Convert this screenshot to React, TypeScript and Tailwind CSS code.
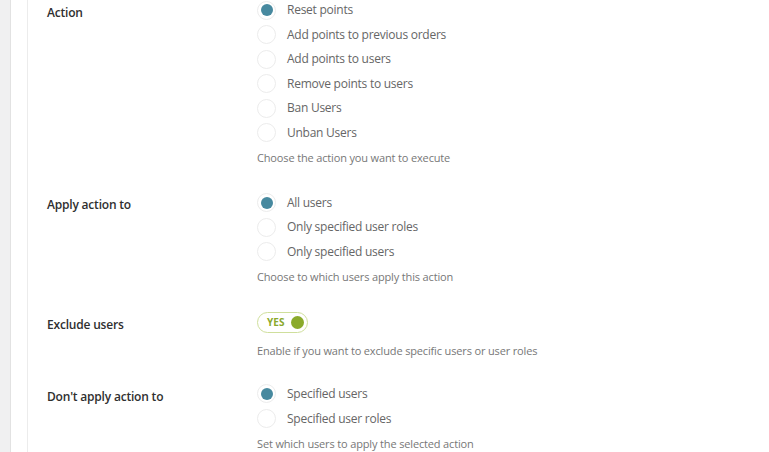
import type { ReactNode } from 'react';

type Section = {
  label: string;
  options?: { text: string; checked?: boolean }[];
  toggle?: boolean;
  description: string;
  descGap: string;
  after: string;
};

const sections: Section[] = [
  {
    label: 'Action',
    options: [
      { text: 'Reset points', checked: true },
      { text: 'Add points to previous orders' },
      { text: 'Add points to users' },
      { text: 'Remove points to users' },
      { text: 'Ban Users' },
      { text: 'Unban Users' },
    ],
    description: 'Choose the action you want to execute',
    descGap: 'mt-[5px]',
    after: 'mb-[24px]',
  },
  {
    label: 'Apply action to',
    options: [
      { text: 'All users', checked: true },
      { text: 'Only specified user roles' },
      { text: 'Only specified users' },
    ],
    description: 'Choose to which users apply this action',
    descGap: 'mt-[5px]',
    after: 'mb-[25px]',
  },
  {
    label: 'Exclude users',
    toggle: true,
    description: 'Enable if you want to exclude specific users or user roles',
    descGap: 'mt-[8px]',
    after: 'mb-[23px]',
  },
  {
    label: "Don't apply action to",
    options: [
      { text: 'Specified users', checked: true },
      { text: 'Specified user roles' },
    ],
    description: 'Set which users to apply the selected action',
    descGap: 'mt-[5px]',
    after: 'mb-[24px]',
  },
];

function Radio({ checked }: { checked?: boolean }) {
  return (
    <span className="w-[19px] h-[19px] rounded-full border border-[#ececec] bg-white flex items-center justify-center shrink-0">
      {checked && <span className="w-[12px] h-[12px] rounded-full bg-[#47899f]" />}
    </span>
  );
}

function Toggle() {
  return (
    <span className="flex items-center h-[21px] w-[51px] rounded-full border border-[#cfdf9c] bg-white pl-[9px] pr-[3px] justify-between">
      <span className="text-[10px] font-bold text-[#8aa92c] tracking-[0.1px]">YES</span>
      <span className="w-[13px] h-[13px] rounded-full bg-[#8aaa2b]" />
    </span>
  );
}

function Row({ children }: { children: ReactNode }) {
  return <div className="h-[24.6px] flex items-center">{children}</div>;
}

export default function App() {
  return (
    <div className="w-[769px] h-[452px] overflow-hidden flex bg-white" style={{ fontFamily: '"Open Sans", "Noto Sans", sans-serif' }}>
      <div className="w-[11px] bg-[#f0f0f1] border-r border-[#e2e2e2]" />
      <div className="w-[17px] border-r border-[#ececec]" />
      <div className="flex-1 pl-[19px] mt-[-2.3px]">
        {sections.map((s) => (
          <div key={s.label} className={`flex ${s.after}`}>
            <div className="w-[210px] shrink-0 pt-[5px] text-[12px] font-semibold text-[#2f2f2f] leading-[20px] tracking-[-0.2px]">
              {s.label}
            </div>
            <div className="flex flex-col">
              {s.options &&
                s.options.map((o) => (
                  <Row key={o.text}>
                    <Radio checked={o.checked} />
                    <span className="ml-[11px] text-[12px] text-[#666] tracking-[-0.25px]">{o.text}</span>
                  </Row>
                ))}
              {s.toggle && (
                <Row>
                  <Toggle />
                </Row>
              )}
              <div className={`${s.descGap} text-[11px] leading-[16px] text-[#777] tracking-[-0.15px]`}>{s.description}</div>
            </div>
          </div>
        ))}
      </div>
    </div>
  );
}
